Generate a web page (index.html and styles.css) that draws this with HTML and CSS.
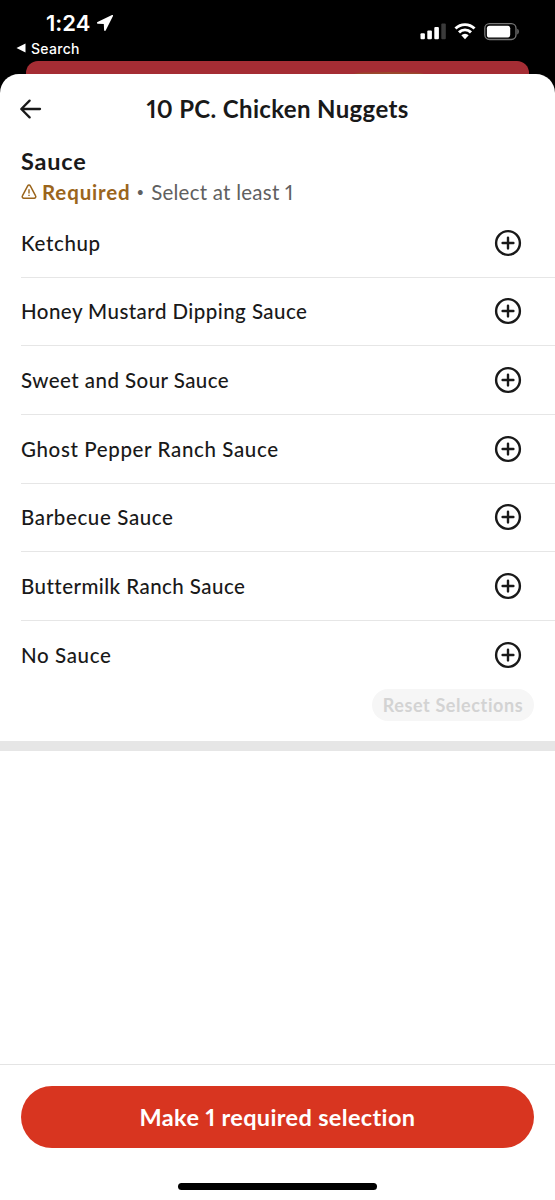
FILE: index.html
```html
<!DOCTYPE html>
<html lang="en">
<head>
<meta charset="utf-8">
<title>10 PC. Chicken Nuggets</title>
<link rel="stylesheet" href="styles.css">
</head>
<body>
<svg class="defs" width="0" height="0" aria-hidden="true">
  <symbol id="plus" viewBox="0 0 28 28"><circle cx="14" cy="14" r="11.9"/><path d="M14 8.6v10.8M8.6 14h10.8"/></symbol>
</svg>
<div class="screen">
  <header class="status">
    <div class="status-left">
      <div class="clock"><span class="time">1:24</span>
        <svg class="location" width="18" height="18" viewBox="0 0 18 18"><path d="M16 1 1.500 8c-.9.500-.7 1.700.3 1.700l6 .3.3 6c.1 1.100 1.300 1.200 1.700.3L17 2c.3-.7-.3-1.300-1-1Z"/></svg>
      </div>
      <div class="back-app"><svg width="10" height="10" viewBox="0 0 10 10"><path d="M9.500.4v9.200L.5 5Z"/></svg><span>Search</span></div>
    </div>
    <div class="status-right">
      <svg width="26" height="18" viewBox="0 0 26 18"><rect x=".5" y="10.300" width="4.400" height="6" rx="1"/><rect x="7.300" y="7.500" width="4.600" height="8.800" rx="1"/><rect x="14.300" y="4" width="4.600" height="12.300" rx="1"/><rect class="dim" x="21.300" y=".5" width="4.500" height="15.800" rx="1"/></svg>
      <svg class="wifi" width="22" height="18" viewBox="0 0 22 18"><path class="arc" d="M1.500 5.600a13.400 13.400 0 0 1 19 0M5 9.400a8.500 8.500 0 0 1 12 0"/><path d="M7.300 12.300a5.300 5.300 0 0 1 7.400 0L11 16.200Z"/></svg>
      <svg class="battery" width="36" height="18" viewBox="0 0 36 18"><rect class="shell" x=".8" y=".7" width="31.200" height="15.800" rx="4.700"/><rect x="2.900" y="2.700" width="23.300" height="11.800" rx="2.600"/><path class="tip" d="M33.300 5.800c2 .8 2 4.800 0 5.600Z"/></svg>
    </div>
  </header>
  <div class="behind"><div class="behind-curve"></div></div>
  <main class="sheet">
    <div class="nav">
      <svg class="arrow" width="22" height="20" viewBox="0 0 22 20"><path d="M20 10H1.600M9.600 1.600 1.300 10l8.300 8.400"/></svg>
      <h1>10 PC. Chicken Nuggets</h1>
    </div>
    <section class="group">
      <h2>Sauce</h2>
      <div class="rule">
        <svg class="warn" width="16" height="16" viewBox="0 0 16 16"><path d="M6.700 1.800a1.500 1.500 0 0 1 2.600 0l5.300 10a1.600 1.600 0 0 1-1.400 2.400H2.800a1.600 1.600 0 0 1-1.400-2.400Z"/><path class="mark" d="M8 5.300v4.200M8 10.700v1.400"/></svg>
        <span class="required">Required</span><span class="dot">•</span><span class="hint">Select at least 1</span>
      </div>
      <ul class="options">
        <li><span>Ketchup</span><svg class="add"><use href="#plus"/></svg></li>
        <li><span class="snug">Honey Mustard Dipping Sauce</span><svg class="add"><use href="#plus"/></svg></li>
        <li><span class="snug">Sweet and Sour Sauce</span><svg class="add"><use href="#plus"/></svg></li>
        <li><span>Ghost Pepper Ranch Sauce</span><svg class="add"><use href="#plus"/></svg></li>
        <li><span>Barbecue Sauce</span><svg class="add"><use href="#plus"/></svg></li>
        <li><span class="snug">Buttermilk Ranch Sauce</span><svg class="add"><use href="#plus"/></svg></li>
        <li><span>No Sauce</span><svg class="add"><use href="#plus"/></svg></li>
      </ul>
      <div class="reset-row"><button class="reset">Reset Selections</button></div>
    </section>
    <div class="band"></div>
    <footer class="footer">
      <button class="submit">Make 1 required selection</button>
      <div class="home"></div>
    </footer>
  </main>
</div>
</body>
</html>
```
FILE: styles.css
```css
* { box-sizing: border-box; margin: 0; padding: 0; }
body { background: #000; font-family: Lato, "Open Sans", sans-serif; font-variant-ligatures: none; font-variant-numeric: proportional-nums; color: #191919; }
button { border: 0; font: inherit; }
svg { display: block; flex: none; }
.defs { position: absolute; }
.screen { width: 555px; height: 1200px; display: flex; flex-direction: column; overflow: hidden; }
.status { height: 61px; display: flex; justify-content: space-between; color: #fff; font-family: Inter, sans-serif; }
.status svg { fill: #fff; }
.status-left { padding: 10px 0 0 16px; }
.clock { display: flex; align-items: center; height: 26px; padding-left: 30px; gap: 6px; }
.time { font-size: 22px; font-weight: 600; }
.back-app { display: flex; align-items: center; gap: 5px; height: 24px; font-size: 14px; font-weight: 500; letter-spacing: .3px; }
.status-right { display: flex; padding: 23px 35px 0 0; align-items: flex-start; }
.status-right .dim { fill: #3b3b3b; }
.wifi { margin-left: 8px; }
.wifi .arc { fill: none; stroke: #fff; stroke-width: 2.900; }
.battery { margin-left: 8px; }
.battery .shell { fill: none; stroke: #777; stroke-width: 1.300; }
.battery .tip { fill: #777; }
.behind { height: 13px; margin: 0 26px; border-radius: 12px 12px 0 0; background: #a52d34; display: flex; justify-content: flex-end; align-items: flex-end; padding-right: 105px; }
.behind-curve { width: 70px; height: 2px; background: #9a4a2c; border-radius: 50% 50% 0 0 / 100% 100% 0 0; }
.sheet { flex: 1; background: #fff; border-radius: 19px 19px 0 0; display: flex; flex-direction: column; }
.nav { height: 71px; display: grid; grid-template-columns: 64px 1fr 64px; align-items: center; padding-bottom: 2px; }
.arrow { margin-left: 20.300px; fill: none; stroke: #191919; stroke-width: 2.300; stroke-linecap: round; stroke-linejoin: round; }
h1 { font-size: 24px; line-height: 30px; font-weight: 700; letter-spacing: .35px; text-align: center; white-space: nowrap; }
.group { height: 596px; }
h2 { font-size: 23.500px; line-height: 32px; font-weight: 700; letter-spacing: .8px; padding-left: 21px; }
.rule { display: flex; align-items: center; height: 30px; padding-left: 21px; font-size: 20.500px; white-space: nowrap; }
.warn { fill: none; stroke: #9b651c; stroke-width: 1.500px; stroke-linejoin: round; margin-right: 5px; }
.warn .mark { stroke-width: 1.400px; }
.required { color: #9b651c; font-weight: 700; letter-spacing: .85px; }
.dot { color: #606060; font-size: 13px; margin: 0 7px 0 6px; }
.hint { color: #606060; letter-spacing: .25px; }
.options { list-style: none; margin-left: 21px; padding-top: 2px; }
.options li { height: 68.670px; display: flex; align-items: center; justify-content: space-between; padding-right: 33px; font-size: 20.500px; font-weight: 500; letter-spacing: .63px; border-bottom: 1.500px solid #e6e6e6; white-space: nowrap; }
.options li .snug { letter-spacing: .45px; }
.options li:last-child { border-bottom: 0; }
.add { width: 28px; height: 28px; fill: none; stroke: #191919; stroke-width: 2.400px; stroke-linecap: round; }
.reset-row { display: flex; justify-content: flex-end; padding-right: 21px; margin-top: -1px; }
.reset { width: 162px; height: 32px; border-radius: 16px; background: #f6f6f6; color: #d3d3d3; font-size: 18px; font-weight: 700; letter-spacing: .6px; white-space: nowrap; }
.band { height: 10px; background: #e6e6e6; }
.footer { margin-top: auto; height: 136px; border-top: 1px solid #e4e4e4; padding: 21px 21px 0; display: flex; flex-direction: column; align-items: center; }
.submit { width: 100%; height: 62px; border-radius: 31px; background: #d83520; color: #fff; font-size: 23.500px; font-weight: 700; letter-spacing: .35px; white-space: nowrap; }
.home { width: 199px; height: 7px; border-radius: 4px; background: #000; margin-top: 35px; }
```
